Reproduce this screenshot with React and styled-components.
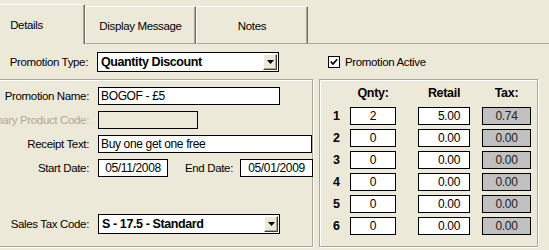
import React from "react";
import styled, { createGlobalStyle } from "styled-components";

const GlobalStyle = createGlobalStyle`
  html, body { margin: 0; padding: 0; background: #ECE9D8; overflow: hidden; }
  body {
    font-family: "Liberation Sans", Arial, sans-serif;
    font-size: 11.5px;
    letter-spacing: -0.35px;
    color: #000;
  }
`;

const Viewport = styled.div`
  width: 549px;
  height: 250px;
  overflow: hidden;
  background: #ECE9D8;
`;

const Window = styled.div`
  width: 581px;
  margin-left: -32px;
  display: flex;
  flex-direction: column;
`;

const TabStrip = styled.div`
  display: flex;
  align-items: flex-end;
  height: 44px;
`;

const Tab = styled.div`
  box-sizing: border-box;
  flex: none;
  width: ${(p) => p.$w}px;
  height: ${(p) => (p.$active ? 40 : 38)}px;
  display: flex;
  align-items: center;
  justify-content: center;
  border-top: 1px solid #fff;
  border-left: 1px solid #fff;
  border-right: 1px solid #716F64;
  box-shadow: inset -1px 0 0 #ACA899;
  border-bottom: ${(p) => (p.$active ? "none" : "1px solid #ACA899")};
  padding-top: ${(p) => (p.$active ? 0 : 1)}px;
`;

const TabFill = styled.div`
  flex: 1;
  height: 1px;
  border-bottom: 1px solid #ACA899;
`;

const TopRow = styled.div`
  display: flex;
  align-items: center;
  height: 35px;
`;

const FieldLabel = styled.div`
  flex: none;
  width: ${(p) => p.$w || 120}px;
  margin-left: ${(p) => p.$ml || 0}px;
  margin-right: ${(p) => p.$mr ?? 9}px;
  display: flex;
  justify-content: ${(p) => (p.$left ? "flex-start" : "flex-end")};
  white-space: nowrap;
  color: ${(p) => (p.$disabled ? "#ACA899" : "#000")};
`;

const Select = styled.div`
  box-sizing: border-box;
  flex: none;
  width: 182px;
  height: 20px;
  border: 1px solid #000;
  background: #fff;
  display: flex;
  align-items: center;
  padding-left: 3px;
  font-weight: bold;
  font-size: 12.5px;
  letter-spacing: -0.4px;
`;

const SelectText = styled.span`
  flex: 1;
  white-space: nowrap;
`;

const DropButton = styled.div`
  box-sizing: border-box;
  width: 14px;
  height: 16px;
  margin-right: 1px;
  background: #ECE9D8;
  border: 1px solid;
  border-color: #fff #404040 #404040 #fff;
  box-shadow: inset -1px -1px 0 #ACA899;
  display: flex;
  align-items: center;
  justify-content: center;
`;

const CheckRow = styled.div`
  display: flex;
  align-items: center;
  gap: 5px;
  margin-left: 49px;
`;

const CheckBox = styled.span`
  box-sizing: border-box;
  width: 12px;
  height: 12px;
  border: 1px solid #000;
  background: #fff;
  display: flex;
  align-items: center;
  justify-content: center;
`;

const Panels = styled.div`
  display: flex;
  gap: 6px;
  height: 168px;
`;

const GroupPanel = styled.div`
  box-sizing: border-box;
  flex: none;
  width: ${(p) => p.$w}px;
  height: 100%;
  border: 1px solid #ACA899;
  box-shadow: inset 1px 1px 0 #fff, 1px 1px 0 #fff;
  display: flex;
  flex-direction: column;
`;

const LeftInner = styled.div`
  flex: 1;
  display: flex;
  flex-direction: column;
  padding: 7px 0 12px 0;
`;

const FormRows = styled.div`
  display: flex;
  flex-direction: column;
  gap: 6px;
`;

const FormRow = styled.div`
  display: flex;
  align-items: center;
  height: ${(p) => p.$h || 18}px;
  margin-top: ${(p) => (p.$push ? "auto" : "0")};
`;

const TextBox = styled.div`
  box-sizing: border-box;
  flex: none;
  width: ${(p) => p.$w}px;
  height: 18px;
  border: 1px solid #000;
  background: ${(p) => p.$bg || "#fff"};
  color: ${(p) => p.$color || "#000"};
  padding: 0 2px 0 ${(p) => p.$pl ?? 2}px;
  line-height: 16px;
  font-size: 12px;
  text-align: ${(p) => p.$align || "left"};
  white-space: nowrap;
  overflow: hidden;
`;

const QtyGrid = styled.div`
  display: grid;
  grid-template-columns: 20px 68px 64px 48px;
  grid-template-rows: 20px repeat(6, 18px);
  row-gap: 4px;
  align-items: center;
  padding: 3px 0 0 10px;
`;

const HeadCell = styled.div`
  width: ${(p) => p.$w}px;
  text-align: center;
  font-weight: bold;
  font-size: 12.5px;
  letter-spacing: -0.3px;
`;

const RowNum = styled.div`
  font-weight: bold;
  font-size: 12.5px;
  padding-left: 3px;
`;

const DropArrow = () => (
  <svg width="7" height="4" viewBox="0 0 7 4">
    <polygon points="0,0 7,0 3.5,4" fill="#000" />
  </svg>
);

const Check = () => (
  <svg width="8" height="8" viewBox="0 0 8 8">
    <polyline points="0.8,3.6 3,6 7.2,1.2" fill="none" stroke="#000" strokeWidth="1.7" />
  </svg>
);

const rows = [
  { q: "2", r: "5.00", t: "0.74" },
  { q: "0", r: "0.00", t: "0.00" },
  { q: "0", r: "0.00", t: "0.00" },
  { q: "0", r: "0.00", t: "0.00" },
  { q: "0", r: "0.00", t: "0.00" },
  { q: "0", r: "0.00", t: "0.00" },
];

export default function App() {
  return (
    <>
      <GlobalStyle />
      <Viewport>
        <Window>
          <TabStrip>
            <Tab $w={117} $active>Details</Tab>
            <Tab $w={111}>Display Message</Tab>
            <Tab $w={112}>Notes</Tab>
            <TabFill />
          </TabStrip>

          <TopRow>
            <FieldLabel>Promotion Type:</FieldLabel>
            <Select>
              <SelectText>Quantity Discount</SelectText>
              <DropButton><DropArrow /></DropButton>
            </Select>
            <CheckRow>
              <CheckBox><Check /></CheckBox>
              <span>Promotion Active</span>
            </CheckRow>
          </TopRow>

          <Panels>
            <GroupPanel $w={345}>
              <LeftInner>
                <FormRows>
                  <FormRow>
                    <FieldLabel>Promotion Name:</FieldLabel>
                    <TextBox $w={182}>BOGOF - £5</TextBox>
                  </FormRow>
                  <FormRow>
                    <FieldLabel $disabled>Primary Product Code:</FieldLabel>
                    <TextBox $w={100} $bg="#ECE9D8" />
                  </FormRow>
                  <FormRow>
                    <FieldLabel>Receipt Text:</FieldLabel>
                    <TextBox $w={214}>Buy one get one free</TextBox>
                  </FormRow>
                  <FormRow>
                    <FieldLabel>Start Date:</FieldLabel>
                    <TextBox $w={70} $align="center">05/11/2008</TextBox>
                    <FieldLabel $w={50} $ml={17} $mr={5} $left>End Date:</FieldLabel>
                    <TextBox $w={73} $align="center">05/01/2009</TextBox>
                  </FormRow>
                </FormRows>
                <FormRow $h={20} $push>
                  <FieldLabel>Sales Tax Code:</FieldLabel>
                  <Select>
                    <SelectText>S - 17.5 - Standard</SelectText>
                    <DropButton><DropArrow /></DropButton>
                  </Select>
                </FormRow>
              </LeftInner>
            </GroupPanel>

            <GroupPanel $w={219}>
              <QtyGrid>
                <span />
                <HeadCell $w={46}>Qnty:</HeadCell>
                <HeadCell $w={52}>Retail</HeadCell>
                <HeadCell $w={49}>Tax:</HeadCell>
                {rows.map((r, i) => (
                  <React.Fragment key={i}>
                    <RowNum>{i + 1}</RowNum>
                    <TextBox $w={46} $align="center">{r.q}</TextBox>
                    <TextBox $w={52} $align="center" $pl={12}>{r.r}</TextBox>
                    <TextBox $w={49} $align="center" $bg="#C0C0C0" $color="#222">{r.t}</TextBox>
                  </React.Fragment>
                ))}
              </QtyGrid>
            </GroupPanel>
          </Panels>
        </Window>
      </Viewport>
    </>
  );
}
